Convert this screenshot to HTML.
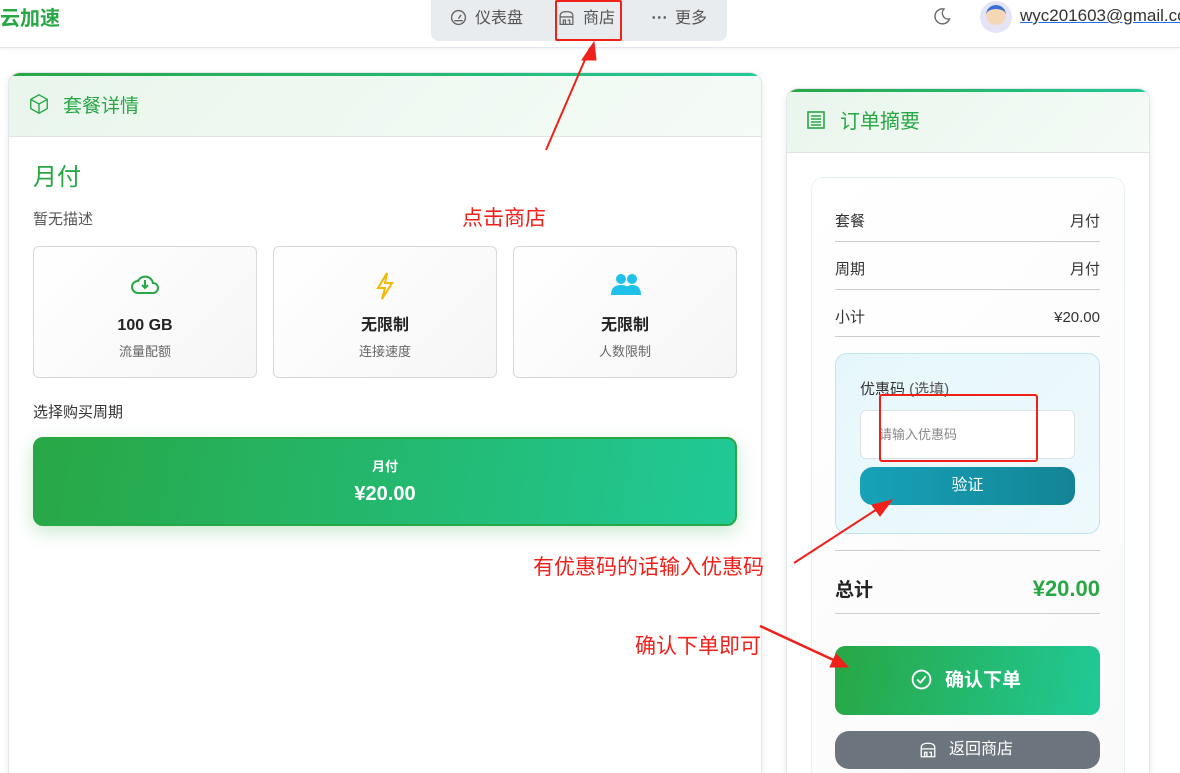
<!DOCTYPE html>
<html><head><meta charset="utf-8"><style>
*{box-sizing:border-box;margin:0;padding:0}
html,body{width:1180px;height:773px;overflow:hidden}
body{background:#fff;font-family:"Liberation Sans","Noto Sans CJK SC",sans-serif;color:#333;position:relative;line-height:1.45}
.a{position:absolute}
.hdr{left:0;top:0;width:1180px;height:48px;border-bottom:1px solid #e3e6ea;box-shadow:0 1px 3px rgba(0,0,0,.05)}
.nav{left:431px;top:0;width:296px;height:41px;background:#e9ecef;border-radius:0 0 8px 8px}
.nt{font-size:16px;color:#555;top:8px;line-height:22px}
.card{border-radius:12px;border:1px solid #e3e6ea;box-shadow:0 2px 8px rgba(0,0,0,.08);overflow:hidden;background:#fff}
.card .top{position:absolute;left:0;top:0;right:0;height:3px;background:linear-gradient(90deg,#28a745,#20c997)}
.card .hd{position:absolute;left:0;top:3px;right:0;height:61px;background:linear-gradient(135deg,#e9f6ec,#f5fbf7);border-bottom:1px solid #dfe5e2}
.feat{top:246px;width:224px;height:132px;border:1px solid #d8d8d8;border-radius:6px;background:linear-gradient(135deg,#fff,#f6f6f6);text-align:center}
.feat b{position:absolute;left:0;right:0;top:68px;font-size:16px;color:#222;line-height:22px}
.feat span{position:absolute;left:0;right:0;top:95px;font-size:13px;color:#666;line-height:20px}
.row{left:835px;width:265px;font-size:15px;color:#333;border-bottom:1px solid #ccc;line-height:22px}
.row span{position:absolute;right:0;top:0}
.red{color:#f0201a;font-size:21px;line-height:28px}
</style></head><body>
<div class="a hdr"></div>
<div class="a" style="left:0;top:5px;font-size:20px;font-weight:bold;color:#28a745">云加速</div>
<div class="a nav"></div>
<svg class="a" style="left:450px;top:9px" width="17" height="17" viewBox="0 0 16 16" fill="none" stroke="#666" stroke-width="1.3"><circle cx="8" cy="8" r="6.5"/><path d="M8 9L10.5 5.5 M4 11H12"/></svg>
<div class="a nt" style="left:475px">仪表盘</div>
<svg class="a" style="left:558px;top:9px" width="17" height="18" viewBox="0 0 16 16" fill="none" stroke="#666" stroke-width="1.2"><path d="M2 6Q2 2 8 2Q14 2 14 6V14H2Z M2 7H14 M5 14V10H7V14 M9 10H11V14"/></svg>
<div class="a nt" style="left:583px">商店</div>
<div class="a" style="left:651px;top:16px;width:16px;height:3px;background:radial-gradient(circle,#666 1.2px,transparent 1.6px) 0 0/5.5px 3px repeat-x"></div>
<div class="a nt" style="left:675px">更多</div>
<div class="a" style="left:555px;top:0;width:67px;height:41px;border:2px solid #f0201a;border-radius:2px"></div>
<svg class="a" style="left:932px;top:6px" width="20" height="20" viewBox="0 0 20 20" fill="none" stroke="#666" stroke-width="1.4"><path d="M12 3A7.5 7.5 0 1 0 17.5 13A6 6 0 0 1 12 3Z"/></svg>
<div class="a" style="left:980px;top:1px;width:32px;height:32px;border-radius:50%;background:#e4e4f6"></div>
<div class="a" style="left:986px;top:5px;width:20px;height:20px;border-radius:50%;background:#f5d7b5;border-top:4px solid #3a6fd8"></div>
<div class="a" style="left:1020px;top:4px;font-size:17px;color:#333;text-decoration:underline;text-decoration-color:#1a73e8;white-space:nowrap">wyc201603@gmail.com</div>

<div class="a card" style="left:8px;top:72px;width:754px;height:730px"><div class="top"></div><div class="hd"></div></div>
<svg class="a" style="left:28px;top:93px" width="22" height="22" viewBox="0 0 24 24" fill="none" stroke="#28a745" stroke-width="1.5"><path d="M12 2L21 7V17L12 22L3 17V7Z M3 7L12 12L21 7 M12 12V22"/></svg>
<div class="a" style="left:63px;top:93px;font-size:19px;color:#28a745">套餐详情</div>
<div class="a" style="left:33px;top:161px;font-size:24px;color:#28a745">月付</div>
<div class="a" style="left:33px;top:209px;font-size:15px;color:#555">暂无描述</div>
<div class="a feat" style="left:33px"><svg class="a" style="left:96px;top:24px" width="30" height="26" viewBox="0 0 30 26" fill="none" stroke="#28a745" stroke-width="2"><path d="M8 22H23A5 5 0 0 0 23 12A8 8 0 0 0 8 10A6 6 0 0 0 8 22Z M15 9V17 M12 14L15 17L18 14"/></svg><b>100 GB</b><span>流量配额</span></div>
<div class="a feat" style="left:273px"><svg class="a" style="left:100px;top:24px" width="22" height="30" viewBox="0 0 22 30" fill="none" stroke="#f5b800" stroke-width="2"><path d="M13 2L4 17H11L8 28L18 12H11Z"/></svg><b>无限制</b><span>连接速度</span></div>
<div class="a feat" style="left:513px"><svg class="a" style="left:97px;top:26px" width="30" height="24" viewBox="0 0 30 24" fill="#1fc1ea"><circle cx="10" cy="6" r="5"/><circle cx="21" cy="6" r="5"/><path d="M0 22Q0 12 10 12Q20 12 20 22Z M12 22Q14 12 21 12Q30 12 30 22Z"/></svg><b>无限制</b><span>人数限制</span></div>
<div class="a" style="left:33px;top:402px;font-size:15px;color:#333">选择购买周期</div>
<div class="a" style="left:33px;top:437px;width:704px;height:89px;border-radius:10px;border:2px solid #28a745;background:linear-gradient(100deg,#28a745,#20c997);box-shadow:0 6px 18px rgba(40,167,69,.25);color:#fff;text-align:center;line-height:1.25">
<div style="margin-top:20px;font-size:13px;font-weight:bold">月付</div>
<div style="margin-top:7px;font-size:20px;font-weight:bold">¥20.00</div></div>

<div class="a card" style="left:786px;top:88px;width:364px;height:720px"><div class="top"></div><div class="hd"></div></div>
<svg class="a" style="left:806px;top:110px" width="20" height="20" viewBox="0 0 20 20" fill="none" stroke="#28a745" stroke-width="1.6"><rect x="2" y="2" width="16" height="16"/><path d="M5 6H15 M5 9H15 M5 12H15 M5 15H15"/></svg>
<div class="a" style="left:840px;top:108px;font-size:20px;color:#28a745">订单摘要</div>
<div class="a" style="left:811px;top:177px;width:314px;height:620px;border:1px solid #e8f3ee;border-radius:12px;background:linear-gradient(135deg,#fff,#fafafa)"></div>
<div class="a row" style="top:211px;height:31px">套餐<span>月付</span></div>
<div class="a row" style="top:259px;height:31px">周期<span>月付</span></div>
<div class="a row" style="top:307px;height:30px">小计<span>¥20.00</span></div>
<div class="a" style="left:835px;top:353px;width:265px;height:181px;border:1px solid #bfe6f0;border-radius:12px;background:linear-gradient(135deg,#e6f7fb,#eef9fc)"></div>
<div class="a" style="left:860px;top:379px;font-size:15px;color:#333">优惠码 <span style="color:#555">(选填)</span></div>
<div class="a" style="left:860px;top:410px;width:215px;height:49px;border:1px solid #dde1e5;border-radius:6px;background:#fff"></div>
<div class="a" style="left:879px;top:426px;font-size:13px;color:#888">请输入优惠码</div>
<div class="a" style="left:860px;top:467px;width:215px;height:38px;border-radius:13px;background:linear-gradient(90deg,#17a2b8,#138496);color:#fff;font-size:16px;text-align:center;line-height:38px">验证</div>
<div class="a" style="left:879px;top:394px;width:159px;height:68px;border:2px solid #f0201a;border-radius:3px"></div>
<div class="a" style="left:835px;top:550px;width:265px;border-top:1px solid #ccc"></div>
<div class="a" style="left:835px;top:578px;font-size:19px;font-weight:bold;color:#222;line-height:26px">总计</div>
<div class="a" style="right:80px;top:575px;font-size:22px;font-weight:bold;color:#28a745;line-height:28px">¥20.00</div>
<div class="a" style="left:835px;top:613px;width:265px;border-top:1px solid #ccc"></div>
<div class="a" style="left:835px;top:646px;width:265px;height:69px;border-radius:10px;background:linear-gradient(100deg,#28a745,#20c997);color:#fff;font-size:19px;font-weight:bold;line-height:69px;padding-left:110px">确认下单</div>
<svg class="a" style="left:911px;top:669px" width="21" height="21" viewBox="0 0 20 20" fill="none" stroke="#fff" stroke-width="1.7"><circle cx="10" cy="10" r="8.5"/><path d="M6 10L9 13L14 7"/></svg>
<div class="a" style="left:835px;top:731px;width:265px;height:38px;border-radius:14px;background:#6c757d;color:#fff;font-size:16px;line-height:38px;padding-left:114px">返回商店</div>
<svg class="a" style="left:919px;top:741px" width="18" height="18" viewBox="0 0 16 16" fill="none" stroke="#fff" stroke-width="1.2"><path d="M2 6Q2 2 8 2Q14 2 14 6V14H2Z M2 7H14 M5 14V10H7V14 M9 10H11V14"/></svg>

<div class="a red" style="left:462px;top:205px">点击商店</div>
<div class="a red" style="left:533px;top:554px">有优惠码的话输入优惠码</div>
<div class="a red" style="left:635px;top:633px">确认下单即可</div>
<svg class="a" style="left:0;top:0" width="1180" height="773" fill="#f0201a" stroke="#f0201a">
<path d="M546 150L590 48" stroke-width="2"/><path d="M594 42L582 60L596 60Z"/>
<path d="M794 563L885 504" stroke-width="2"/><path d="M892 500L872 505L880 516Z"/>
<path d="M760 626L840 663" stroke-width="2.5"/><path d="M848 667L836 654L830 667Z"/>
</svg>
</body></html>
